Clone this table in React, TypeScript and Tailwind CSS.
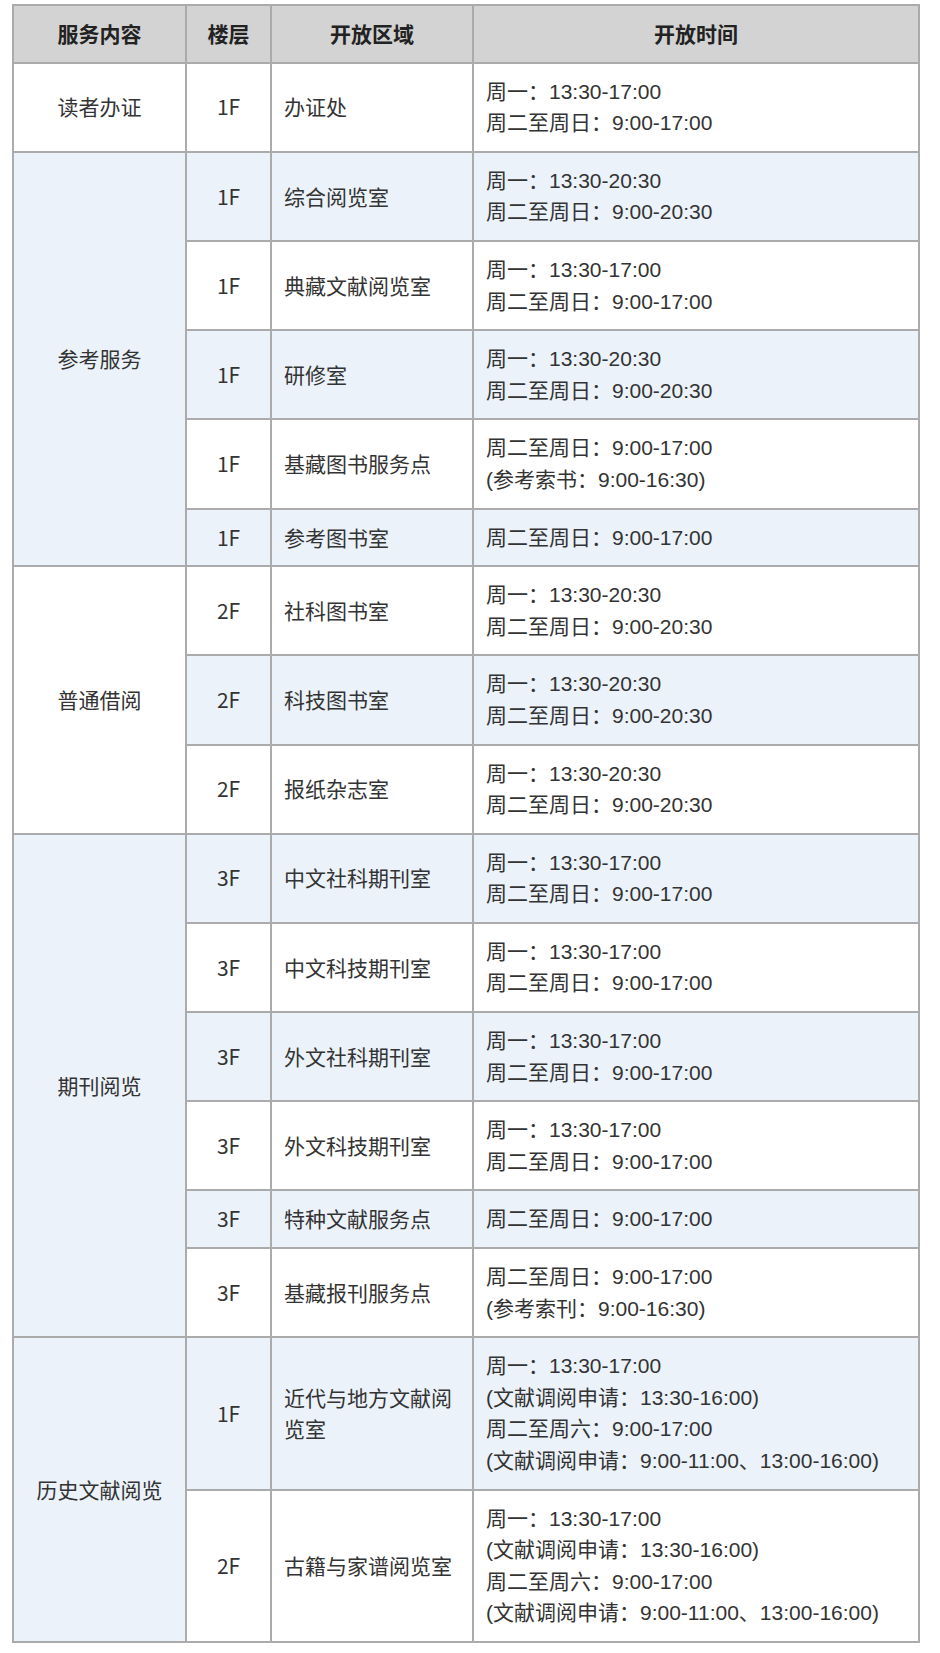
import React from "react";

type Row = { floor: string; area: string[]; times: string[] };
type Group = { name: string; rows: Row[] };

const WK = ["周一：13:30-17:00", "周二至周日：9:00-17:00"];
const EV = ["周一：13:30-20:30", "周二至周日：9:00-20:30"];
const HIST = [
  "周一：13:30-17:00",
  "(文献调阅申请：13:30-16:00)",
  "周二至周六：9:00-17:00",
  "(文献调阅申请：9:00-11:00、13:00-16:00)",
];

const groups: Group[] = [
  { name: "读者办证", rows: [{ floor: "1F", area: ["办证处"], times: WK }] },
  {
    name: "参考服务",
    rows: [
      { floor: "1F", area: ["综合阅览室"], times: EV },
      { floor: "1F", area: ["典藏文献阅览室"], times: WK },
      { floor: "1F", area: ["研修室"], times: EV },
      { floor: "1F", area: ["基藏图书服务点"], times: ["周二至周日：9:00-17:00", "(参考索书：9:00-16:30)"] },
      { floor: "1F", area: ["参考图书室"], times: ["周二至周日：9:00-17:00"] },
    ],
  },
  {
    name: "普通借阅",
    rows: [
      { floor: "2F", area: ["社科图书室"], times: EV },
      { floor: "2F", area: ["科技图书室"], times: EV },
      { floor: "2F", area: ["报纸杂志室"], times: EV },
    ],
  },
  {
    name: "期刊阅览",
    rows: [
      { floor: "3F", area: ["中文社科期刊室"], times: WK },
      { floor: "3F", area: ["中文科技期刊室"], times: WK },
      { floor: "3F", area: ["外文社科期刊室"], times: WK },
      { floor: "3F", area: ["外文科技期刊室"], times: WK },
      { floor: "3F", area: ["特种文献服务点"], times: ["周二至周日：9:00-17:00"] },
      { floor: "3F", area: ["基藏报刊服务点"], times: ["周二至周日：9:00-17:00", "(参考索刊：9:00-16:30)"] },
    ],
  },
  {
    name: "历史文献阅览",
    rows: [
      { floor: "1F", area: ["近代与地方文献阅", "览室"], times: HIST },
      { floor: "2F", area: ["古籍与家谱阅览室"], times: HIST },
    ],
  },
];

const cjk = "font-['Noto_Sans_CJK_SC','Noto_Sans',sans-serif]";
const mixed = "font-['Liberation_Sans','Noto_Sans_CJK_SC',sans-serif]";

export default function App() {
  let idx = 0;
  const body: React.ReactNode[] = [];
  groups.forEach((g) => {
    g.rows.forEach((r, i) => {
      const blue = idx % 2 === 1;
      idx++;
      const bg = blue ? "bg-[#ebf2fa]" : "bg-white";
      body.push(
        <tr key={g.name + i} className={bg}>
          {i === 0 && (
            <td
              rowSpan={g.rows.length}
              className={`border-2 border-[#ababab] text-center align-middle px-2 py-3 ${cjk}`}
            >
              {g.name}
            </td>
          )}
          <td className={`border-2 border-[#ababab] text-center align-middle px-2 py-3 ${cjk}`}>{r.floor}</td>
          <td className={`border-2 border-[#ababab] text-left align-middle px-3 py-3 ${cjk}`}>
            {r.area.map((a, k) => (
              <div key={k}>{a}</div>
            ))}
          </td>
          <td className={`border-2 border-[#ababab] text-left align-middle px-3 py-3 ${mixed}`}>
            {r.times.map((t, k) => (
              <div key={k} className="whitespace-nowrap">{t}</div>
            ))}
          </td>
        </tr>
      );
    });
  });

  return (
    <div className="bg-white w-[940px] min-h-[1653px] pt-[4px] pl-[12px]">
      <table className="table-fixed border-collapse w-[908px] text-[21px] leading-[31.6px] text-[#333]">
        <colgroup>
          <col className="w-[173px]" />
          <col className="w-[85px]" />
          <col className="w-[202px]" />
          <col />
        </colgroup>
        <thead>
          <tr className="bg-[#d3d3d3]">
            {["服务内容", "楼层", "开放区域", "开放时间"].map((h) => (
              <th
                key={h}
                className={`border-2 border-[#ababab] text-center align-middle px-2 py-3 font-bold text-[#222] ${cjk}`}
              >
                {h}
              </th>
            ))}
          </tr>
        </thead>
        <tbody>{body}</tbody>
      </table>
    </div>
  );
}
